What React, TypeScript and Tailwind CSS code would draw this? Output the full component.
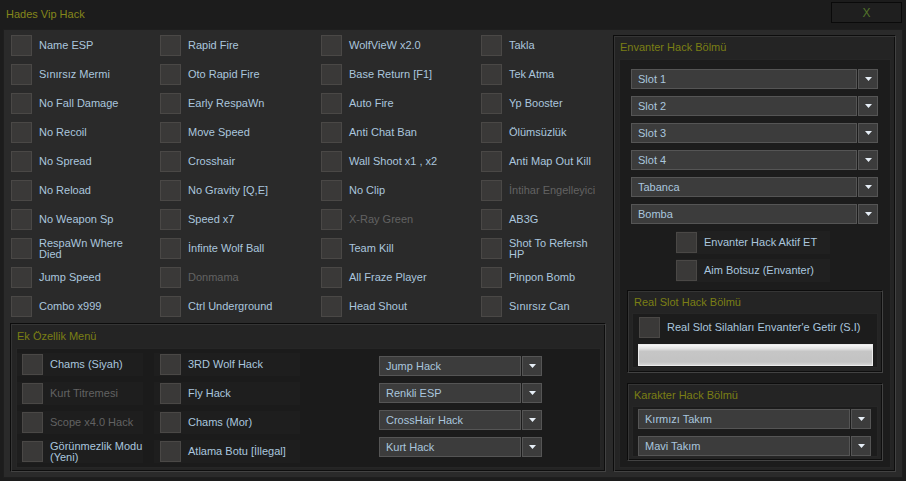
import React from 'react';

type Opt = { t: string; off?: boolean };

const cols: Opt[][] = [
  [
    { t: 'Name ESP' },
    { t: 'Sınırsız Mermi' },
    { t: 'No Fall Damage' },
    { t: 'No Recoil' },
    { t: 'No Spread' },
    { t: 'No Reload' },
    { t: 'No Weapon Sp' },
    { t: 'RespaWn Where\nDied' },
    { t: 'Jump Speed' },
    { t: 'Combo x999' },
  ],
  [
    { t: 'Rapid Fire' },
    { t: 'Oto Rapid Fire' },
    { t: 'Early RespaWn' },
    { t: 'Move Speed' },
    { t: 'Crosshair' },
    { t: 'No Gravity [Q,E]' },
    { t: 'Speed x7' },
    { t: 'İnfinte Wolf Ball' },
    { t: 'Donmama', off: true },
    { t: 'Ctrl Underground' },
  ],
  [
    { t: 'WolfVieW x2.0' },
    { t: 'Base Return [F1]' },
    { t: 'Auto Fire' },
    { t: 'Anti Chat Ban' },
    { t: 'Wall Shoot x1 , x2' },
    { t: 'No Clip' },
    { t: 'X-Ray Green', off: true },
    { t: 'Team Kill' },
    { t: 'All Fraze Player' },
    { t: 'Head Shout' },
  ],
  [
    { t: 'Takla' },
    { t: 'Tek Atma' },
    { t: 'Yp Booster' },
    { t: 'Ölümsüzlük' },
    { t: 'Anti Map Out Kill' },
    { t: 'İntihar Engelleyici', off: true },
    { t: 'AB3G' },
    { t: 'Shot To Refersh\nHP' },
    { t: 'Pinpon Bomb' },
    { t: 'Sınırsız Can' },
  ],
];

function Check() {
  return <div className="w-[21px] h-[21px] shrink-0 bg-[#3a3938] border border-[#4a4846]" />;
}

function Label({ o }: { o: Opt }) {
  return (
    <span className={`whitespace-pre leading-[11px] ${o.off ? 'text-[#626262]' : 'text-[#aac6de]'}`}>
      {o.t}
    </span>
  );
}

function Item({ o }: { o: Opt }) {
  return (
    <div className="flex items-center gap-[7px] h-[21px]">
      <Check />
      <Label o={o} />
    </div>
  );
}

function Arrow() {
  return (
    <svg width="7" height="4" viewBox="0 0 7 4">
      <path d="M0 0h7L3.5 4z" fill="#e6eef6" />
    </svg>
  );
}

function Drop({ text, w }: { text: string; w: string }) {
  return (
    <div className={`flex h-[20px] gap-[1px] ${w}`}>
      <div className="flex-1 flex items-center pl-[6px] bg-[#3c3c3c] border border-[#555555] text-[#aac6de]">
        {text}
      </div>
      <div className="w-[20px] flex items-center justify-center bg-[#3c3c3c] border border-[#555555]">
        <Arrow />
      </div>
    </div>
  );
}

const groupCls =
  'flex flex-col border border-t-[#0c0c0c] border-l-[#0c0c0c] border-b-[#424242] border-r-[#424242] bg-[#242424] shadow-[inset_1px_1px_0_#353535,inset_-1px_-1px_0_#0e0e0e]';

export default function App() {
  return (
    <div className="w-[906px] h-[481px] bg-[#1c1c1c] font-['Liberation_Sans',Arial,sans-serif] text-[11px] overflow-hidden">
      {/* title bar */}
      <div className="h-[29px] flex justify-between">
        <div className="pl-[6px] pt-[6px] text-[#85871b]">Hades Vip Hack</div>
        <div className="mt-[2px] mr-[4px] w-[71px] h-[21px] border border-[#0a0a0a] bg-[#1f1f1f] flex items-center justify-center text-[#52732a] text-[12px]">
          X
        </div>
      </div>

      {/* main */}
      <div className="mx-[3px] h-[449px] bg-[#2a2a2a] border border-[#1e1e1e] flex">
        <div className="w-[609px] pl-[6px] pt-[5px] flex flex-col">
          <div className="ml-[1px] grid grid-flow-col grid-cols-[149px_161px_160px_125px] grid-rows-[repeat(10,21px)] gap-y-[8px]">
            {cols.map((c, i) => c.map((o, j) => <Item key={`${i}-${j}`} o={o} />))}
          </div>

          {/* Ek Özellik */}
          <div className={`${groupCls} mt-[6px] w-[596px] h-[149px] pl-[5px] pr-[4px] pb-[3px]`}>
            <div className="h-[24px] flex items-center pl-[1px] text-[#7b7f14]">Ek Özellik Menü</div>
            <div className="flex-1 bg-[#1b1b1b] border border-[#262626] flex">
              <div className="w-[137px] pt-[4px] flex flex-col gap-[6px]">
                {[
                  { t: 'Chams (Siyah)' },
                  { t: 'Kurt Titremesi', off: true },
                  { t: 'Scope x4.0 Hack', off: true },
                  { t: 'Görünmezlik Modu\n(Yeni)' },
                ].map((o) => (
                  <div key={o.t} className="w-[126px] h-[23px] pl-[5px] flex items-center bg-[#1e1e1e]">
                    <Item o={o} />
                  </div>
                ))}
              </div>
              <div className="w-[225px] pt-[4px] flex flex-col gap-[6px]">
                {['3RD Wolf Hack', 'Fly Hack', 'Chams (Mor)', 'Atlama Botu [İllegal]'].map((t) => (
                  <div key={t} className="w-[146px] h-[23px] pl-[6px] flex items-center bg-[#1e1e1e]">
                    <Item o={{ t }} />
                  </div>
                ))}
              </div>
              <div className="pt-[7px] flex flex-col gap-[7px]">
                {['Jump Hack', 'Renkli ESP', 'CrossHair Hack', 'Kurt Hack'].map((t) => (
                  <Drop key={t} text={t} w="w-[163px]" />
                ))}
              </div>
            </div>
          </div>
        </div>

        {/* Envanter */}
        <div className={`${groupCls} mt-[5px] w-[283px] h-[437px] pl-[5px] pr-[4px] pb-[3px]`}>
          <div className="h-[23px] flex items-center pl-[1px] text-[#7b7f14]">Envanter Hack Bölmü</div>
          <div className="flex-1 bg-[#1c1c1c] border border-[#262626] flex flex-col pt-[9px]">
            <div className="pl-[11px] flex flex-col gap-[7px]">
              {['Slot 1', 'Slot 2', 'Slot 3', 'Slot 4', 'Tabanca', 'Bomba'].map((t) => (
                <Drop key={t} text={t} w="w-[247px]" />
              ))}
            </div>
            <div className="pl-[56px] pt-[7px] flex flex-col gap-[5px]">
              {['Envanter Hack Aktif ET', 'Aim Botsuz (Envanter)'].map((t) => (
                <div key={t} className="w-[154px] h-[23px] flex items-center bg-[#202020]">
                  <Item o={{ t }} />
                </div>
              ))}
            </div>

            {/* Real Slot */}
            <div className={`${groupCls} ml-[7px] mt-[8px] w-[256px] h-[83px] pl-[4px] pr-[4px] pb-[4px]`}>
              <div className="h-[22px] flex items-center pl-[2px] text-[#7b7f14]">Real Slot Hack Bölmü</div>
              <div className="flex-1 bg-[#1c1c1c] border border-[#262626] pt-[3px] pl-[6px]">
                <Item o={{ t: "Real Slot Silahları Envanter'e Getir (S.I)" }} />
                <div className="mt-[6px] -ml-[1px] w-[235px] h-[22px] border border-[#ececec] bg-[linear-gradient(to_bottom,#f6f6f6_0%,#e2e2e2_18%,#c6c6c6_32%,#c3c3c3_85%,#d6d6d6_100%)]" />
              </div>
            </div>

            {/* Karakter */}
            <div className={`${groupCls} ml-[7px] mt-[10px] w-[256px] h-[78px] pl-[4px] pr-[4px] pb-[3px]`}>
              <div className="h-[22px] flex items-center pl-[2px] text-[#7b7f14]">Karakter Hack Bölmü</div>
              <div className="flex-1 bg-[#1c1c1c] border border-[#262626] pt-[2px] pl-[5px] flex flex-col gap-[7px]">
                {['Kırmızı Takım', 'Mavi Takım'].map((t) => (
                  <Drop key={t} text={t} w="w-[233px]" />
                ))}
              </div>
            </div>
          </div>
        </div>
      </div>
    </div>
  );
}
